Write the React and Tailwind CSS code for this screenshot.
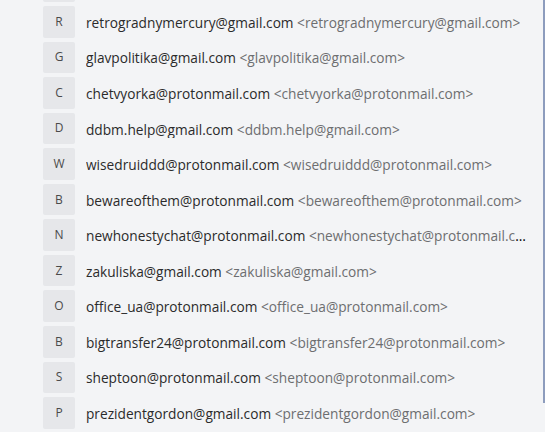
import React from 'react';

const contacts = [
  { letter: 'A', email: 'anonymous@gmail.com' },
  { letter: 'R', email: 'retrogradnymercury@gmail.com' },
  { letter: 'G', email: 'glavpolitika@gmail.com' },
  { letter: 'C', email: 'chetvyorka@protonmail.com' },
  { letter: 'D', email: 'ddbm.help@gmail.com' },
  { letter: 'W', email: 'wisedruiddd@protonmail.com' },
  { letter: 'B', email: 'bewareofthem@protonmail.com' },
  { letter: 'N', email: 'newhonestychat@protonmail.com' },
  { letter: 'Z', email: 'zakuliska@gmail.com' },
  { letter: 'O', email: 'office_ua@protonmail.com' },
  { letter: 'B', email: 'bigtransfer24@protonmail.com' },
  { letter: 'S', email: 'sheptoon@protonmail.com' },
  { letter: 'P', email: 'prezidentgordon@gmail.com' },
  { letter: 'K', email: 'kontakt@gmail.com' },
];

const ContactRow = ({ letter, email }) => (
  <li className="flex h-[31.55px] items-center">
    <span className="flex h-full w-8 shrink-0 items-center justify-center rounded-[2px] bg-[#e6e7ea] text-[12px] text-[#4a4a4a]">
      {letter}
    </span>
    <p className="ml-[11px] min-w-0 truncate pt-[2px] text-[13.7px] leading-[1.3]">
      <span className="text-[#2b2b2b]">{email}</span>{' '}
      <span className="text-[#6d6e70]">&lt;{email}&gt;</span>
    </p>
  </li>
);

export default function App() {
  return (
    <div className="h-[432px] w-[545px] overflow-hidden bg-[#f3f4f6] font-['Open_Sans',sans-serif]">
      <div className="h-full border-r-2 border-[#8d9cbd] pr-[14px] pl-[43px]">
        <ul className="mt-[-29.5px] flex flex-col gap-[4px]">
          {contacts.map((c, i) => (
            <ContactRow key={`${c.email}-${i}`} {...c} />
          ))}
        </ul>
      </div>
    </div>
  );
}
